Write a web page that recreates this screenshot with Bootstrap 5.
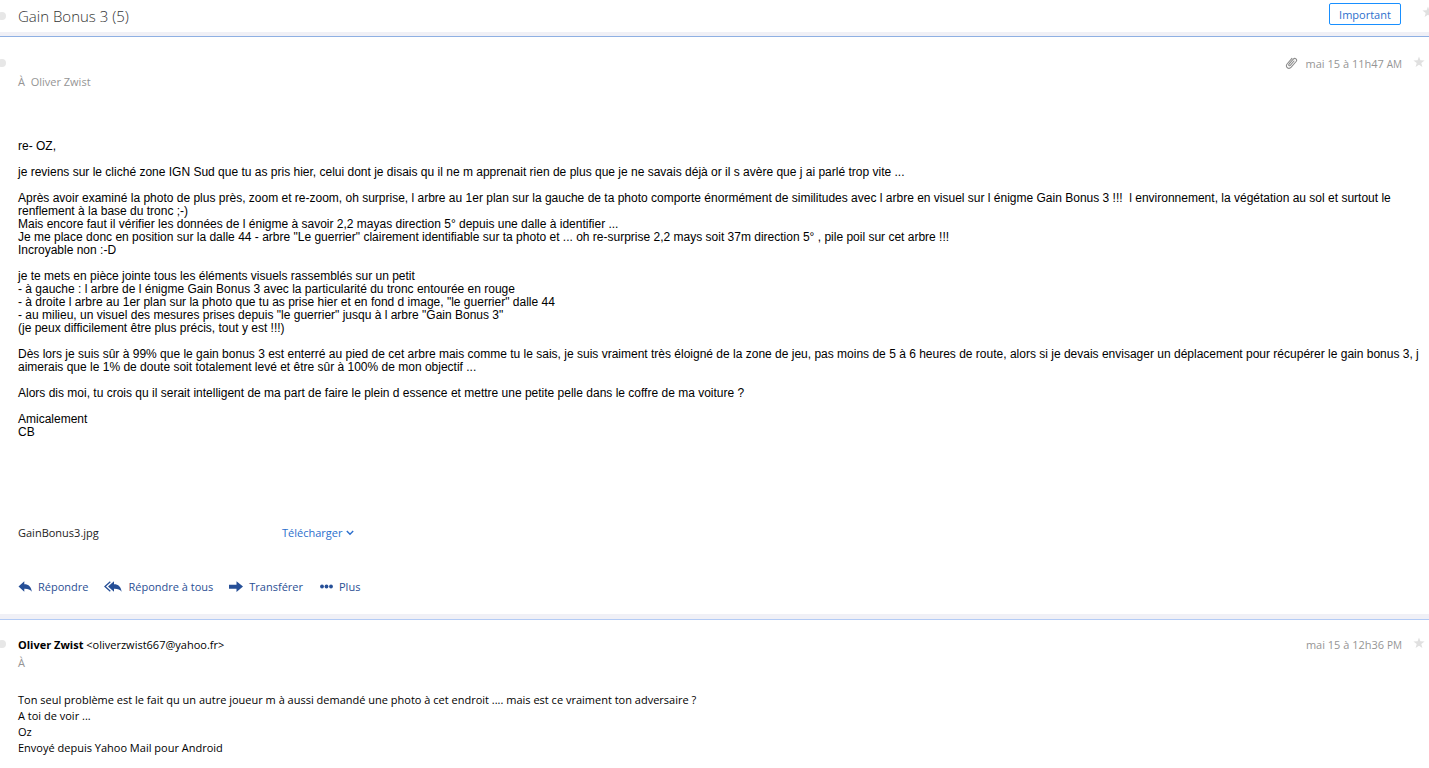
<!DOCTYPE html>
<html lang="fr">
<head>
<meta charset="utf-8">
<meta name="viewport" content="width=device-width, initial-scale=1">
<title>Gain Bonus 3</title>
<link rel="stylesheet" href="https://cdn.jsdelivr.net/npm/bootstrap@5.3.0/dist/css/bootstrap.min.css">
<style>
  body { font-family: "Open Sans", "Noto Sans", sans-serif; font-size: 11px; line-height: 16px; color: #222; background: #fff; overflow-x: hidden; }
  .gutter-left { width: 18px; flex: none; }
  .gutter-right { width: 27px; flex: none; padding-left: 11px; }
  .unread { width: 8px; height: 8px; margin-left: -2px; border-radius: 50%; border: 0; padding: 0; background: #e7e7e7; display: block; }
  .star { border: 0; padding: 0; background: none; display: block; color: #e0e0e0; line-height: 0; }
  .topbar { height: 32px; }
  .topbar .gutter-right { width: 28px; padding-left: 21px; }
  .topbar .star { margin-bottom: 8px; }
  .subject { font-size: 15px; line-height: 24px; font-weight: 300; color: #333; }
  .tag { width: 72px; height: 22px; margin-bottom: 4px; padding: 2px 0 0; border: 1px solid #188fff; border-radius: 2px; background: #fff; color: #2c6fcd; font-size: 11px; line-height: 18px; }
  .band { height: 5px; background: #f0f0f6; border-bottom: 1px solid #8fb0e3; }
  .band-soft { height: 6px; border-bottom-color: #b3cbf5; }
  .meta { color: #959595; }
  .meridiem { font-size: 10px; }
  .message-head { padding-top: 16px; line-height: 18px; }
  .first .message-head { padding-top: 18px; }
  .message-head .unread { margin-top: 4px; }
  .message-head .star { margin-top: 1px; }
  .sender { color: #000; }
  .indent { padding-left: 18px; padding-right: 8px; }
  .arial { margin-top: 49px; font-family: "Liberation Sans", Arial, sans-serif; font-size: 12px; line-height: 13px; color: #000; }
  .arial p { margin-bottom: 13px; }
  .reply { margin-top: 20px; color: #000; }
  .files { margin-top: 86px; }
  .file { width: 264px; }
  .download { color: #2c6fcd; border: 0; background: none; padding: 0; }
  .actions { margin-top: 38px; padding-bottom: 19px; }
  .act { gap: 6px; border: 0; background: none; padding: 0; color: #2b4f94; }
  .act svg { color: #264f97; }
</style>
</head>
<body>
<header class="topbar d-flex align-items-center">
  <div class="gutter-left"><button class="unread" aria-label="Marquer comme non lu"></button></div>
  <h1 class="subject flex-grow-1 mb-0">Gain Bonus 3 (5)</h1>
  <button class="tag">Important</button>
  <div class="gutter-right"><button class="star" aria-label="Suivre la conversation"><svg width="12" height="12" viewBox="0 0 12 12"><path fill="currentColor" d="M6 .4 7.4 4.3 11.6 4.4 8.3 7 9.4 11 6 8.7 2.6 11 3.7 7 .4 4.4 4.6 4.3Z"/></svg></button></div>
</header>
<div class="band"></div>

<main>
  <article class="first">
    <div class="message-head d-flex">
      <div class="gutter-left"><button class="unread" aria-label="Marquer comme non lu"></button></div>
      <div class="flex-grow-1 d-flex justify-content-between">
        <div class="meta"><br>À&nbsp; Oliver Zwist</div>
        <div class="meta d-flex gap-2">
          <svg class="mt-0" width="13" height="16" viewBox="0 0 13 16" fill="none" stroke="#8c8c8c" stroke-width="1.1" stroke-linecap="round"><path d="M9 6 5.300 10.300c-.9 1-2.200-.1-1.300-1.100l4.300-5c1.700-1.900 4.400.3 2.800 2.300l-4.900 5.700c-2.500 2.700-6.400-.3-4.100-3.200L6.900 3.400"/></svg>
          <time>mai 15 à 11h47 <span class="meridiem">AM</span></time>
        </div>
      </div>
      <div class="gutter-right"><button class="star" aria-label="Suivre"><svg width="12" height="12" viewBox="0 0 12 12"><path fill="currentColor" d="M6 .4 7.4 4.3 11.6 4.4 8.3 7 9.4 11 6 8.7 2.6 11 3.7 7 .4 4.4 4.6 4.3Z"/></svg></button></div>
    </div>

    <div class="arial indent">
      <p>re- OZ,</p>
      <p>je reviens sur le cliché zone IGN Sud que tu as pris hier, celui dont je disais qu il ne m apprenait rien de plus que je ne savais déjà or il s avère que j ai parlé trop vite ...</p>
      <p>Après avoir examiné la photo de plus près, zoom et re-zoom, oh surprise, l arbre au 1er plan sur la gauche de ta photo comporte énormément de similitudes avec l arbre en visuel sur l énigme Gain Bonus 3 !!!&nbsp; l environnement, la végétation au sol et surtout le renflement à la base du tronc ;-)<br>
      Mais encore faut il vérifier les données de l énigme à savoir 2,2 mayas direction 5° depuis une dalle à identifier ...<br>
      Je me place donc en position sur la dalle 44 - arbre "Le guerrier" clairement identifiable sur ta photo et ... oh re-surprise 2,2 mays soit 37m direction 5° , pile poil sur cet arbre !!!<br>
      Incroyable non :-D</p>
      <p>je te mets en pièce jointe tous les éléments visuels rassemblés sur un petit<br>
      - à gauche : l arbre de l énigme Gain Bonus 3 avec la particularité du tronc entourée en rouge<br>
      - à droite l arbre au 1er plan sur la photo que tu as prise hier et en fond d image, "le guerrier" dalle 44<br>
      - au milieu, un visuel des mesures prises depuis "le guerrier" jusqu à l arbre "Gain Bonus 3"<br>
      (je peux difficilement être plus précis, tout y est !!!)</p>
      <p>Dès lors je suis sûr à 99% que le gain bonus 3 est enterré au pied de cet arbre mais comme tu le sais, je suis vraiment très éloigné de la zone de jeu, pas moins de 5 à 6 heures de route, alors si je devais envisager un déplacement pour récupérer le gain bonus 3, j aimerais que le 1% de doute soit totalement levé et être sûr à 100% de mon objectif ...</p>
      <p>Alors dis moi, tu crois qu il serait intelligent de ma part de faire le plein d essence et mettre une petite pelle dans le coffre de ma voiture ?</p>
      <p class="mb-0">Amicalement<br>CB</p>
    </div>

    <div class="files indent d-flex">
      <div class="file">GainBonus3.jpg</div>
      <button class="download d-flex align-items-center gap-1">Télécharger <svg width="8" height="6" viewBox="0 0 8 6" fill="none" stroke="currentColor" stroke-width="1.4"><path d="M.8 1 4 4.200 7.200 1"/></svg></button>
    </div>

    <div class="actions indent d-flex gap-3">
      <button class="act d-flex align-items-center"><svg width="14" height="12" viewBox="0 0 14 12"><path fill="currentColor" d="M.5 5.500 6.300.3v2.900c4.500 0 6.900 2.500 7.500 7.500-1.700-2.400-4-3.100-7.500-3v3Z"/></svg>Répondre</button>
      <button class="act d-flex align-items-center"><svg width="18" height="12" viewBox="0 0 18 12"><path fill="none" stroke="currentColor" stroke-width="1.300" d="M6.300.8 1 5.500l5.300 4.700"/><path fill="currentColor" d="M4 5.500 10 .3v2.900c4.500 0 7 2.500 7.600 7.500C16 8.300 13.500 7.600 10 7.700v3Z"/></svg>Répondre à tous</button>
      <button class="act d-flex align-items-center"><svg width="14" height="12" viewBox="0 0 14 12"><path fill="currentColor" d="M0 3.700h7.500V.3L14 5.600 7.500 11V7.700H0Z"/></svg>Transférer</button>
      <button class="act d-flex align-items-center"><svg width="14" height="12" viewBox="0 0 14 12" fill="currentColor"><circle cx="3" cy="5.500" r="1.900"/><circle cx="7.500" cy="5.500" r="1.900"/><circle cx="12" cy="5.500" r="1.900"/></svg>Plus</button>
    </div>
  </article>
  <div class="band band-soft"></div>

  <article>
    <div class="message-head d-flex">
      <div class="gutter-left"><button class="unread" aria-label="Marquer comme non lu"></button></div>
      <div class="flex-grow-1 d-flex justify-content-between">
        <div>
          <div class="sender"><strong>Oliver Zwist</strong> &lt;oliverzwist667@yahoo.fr&gt;</div>
          <div class="meta">À</div>
        </div>
        <time class="meta">mai 15 à 12h36 <span class="meridiem">PM</span></time>
      </div>
      <div class="gutter-right"><button class="star" aria-label="Suivre"><svg width="12" height="12" viewBox="0 0 12 12"><path fill="currentColor" d="M6 .4 7.4 4.3 11.6 4.4 8.3 7 9.4 11 6 8.7 2.6 11 3.7 7 .4 4.4 4.6 4.3Z"/></svg></button></div>
    </div>
    <div class="reply indent">Ton seul problème est le fait qu un autre joueur m à aussi demandé une photo à cet endroit .... mais est ce vraiment ton adversaire ?<br>A toi de voir ...<br>Oz<br>Envoyé depuis Yahoo Mail pour Android</div>
  </article>
</main>
<script src="https://cdn.jsdelivr.net/npm/bootstrap@5.3.0/dist/js/bootstrap.bundle.min.js"></script>
</body>
</html>
